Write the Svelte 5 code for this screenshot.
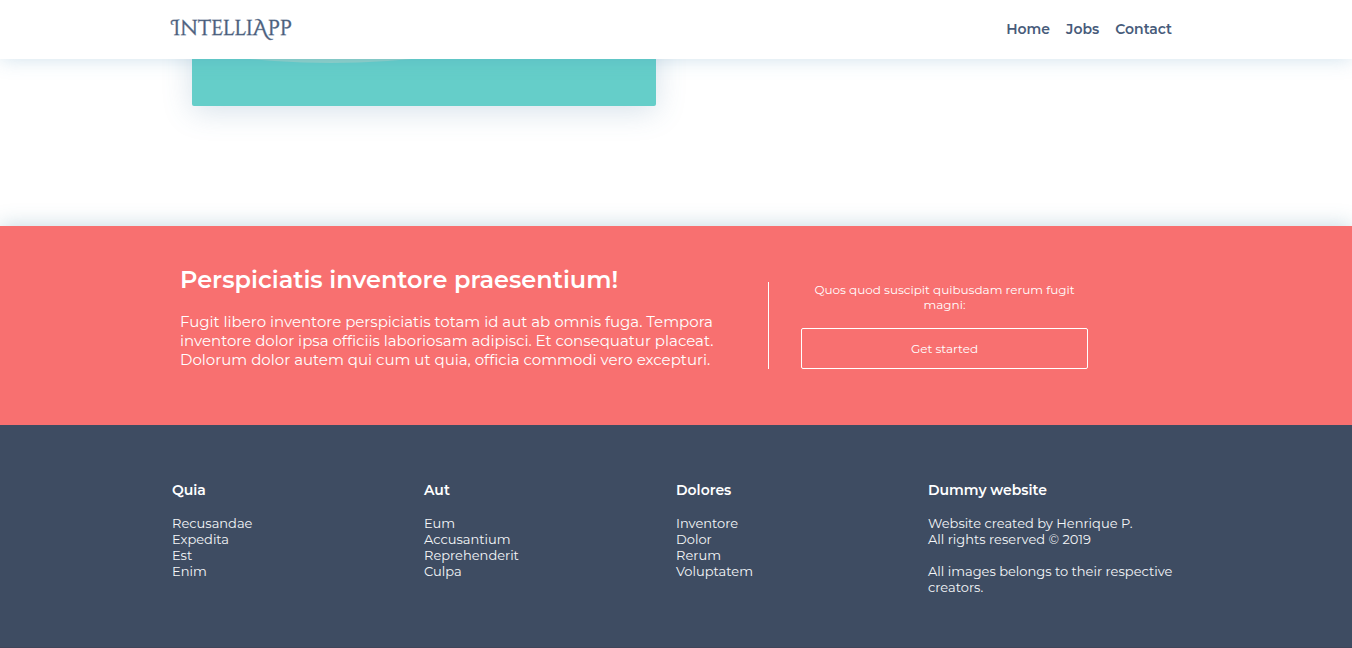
<script>
  const nav = ['Home', 'Jobs', 'Contact'];
  const columns = [
    { title: 'Quia', links: ['Recusandae', 'Expedita', 'Est', 'Enim'] },
    { title: 'Aut', links: ['Eum', 'Accusantium', 'Reprehenderit', 'Culpa'] },
    { title: 'Dolores', links: ['Inventore', 'Dolor', 'Rerum', 'Voluptatem'] }
  ];
</script>

<header class="topbar">
  <div class="container bar">
    <a class="brand" href="#home">IntelliApp</a>
    <nav>
      {#each nav as item}
        <a href="#{item.toLowerCase()}">{item}</a>
      {/each}
    </nav>
  </div>
</header>

<main>
  <section class="showcase">
    <div class="container">
      <div class="card">
        <svg viewBox="0 0 464 96" aria-hidden="true">
          <ellipse cx="139" cy="-47" rx="290" ry="100" />
        </svg>
      </div>
    </div>
  </section>

  <section class="banner">
    <div class="container pitch">
      <div class="copy">
        <h2>Perspiciatis inventore praesentium!</h2>
        <p>
          Fugit libero inventore perspiciatis totam id aut ab omnis fuga. Tempora
          inventore dolor ipsa officiis laboriosam adipisci. Et consequatur placeat.
          Dolorum dolor autem qui cum ut quia, officia commodi vero excepturi.
        </p>
      </div>
      <div class="action">
        <p>Quos quod suscipit quibusdam rerum fugit magni:</p>
        <button type="button">Get started</button>
      </div>
    </div>
  </section>
</main>

<footer>
  <div class="container columns">
    {#each columns as column}
      <div>
        <h3>{column.title}</h3>
        <ul>
          {#each column.links as link}
            <li><a href="#{link.toLowerCase()}">{link}</a></li>
          {/each}
        </ul>
      </div>
    {/each}
    <div>
      <h3>Dummy website</h3>
      <p>Website created by Henrique P.<br />All rights reserved © 2019</p>
      <p>All images belongs to their respective creators.</p>
    </div>
  </div>
</footer>

<style>
  :global(body) {
    margin: 0;
    background: #fff;
    font-family: Montserrat, Inter, sans-serif;
    font-size: 13px;
    line-height: 16px;
  }
  h2, h3, p, ul { margin: 0; padding: 0; }
  ul { list-style: none; }
  a { color: inherit; text-decoration: none; }
  .container {
    box-sizing: border-box;
    max-width: 1008px;
    margin: 0 auto;
  }
  .topbar {
    position: relative;
    z-index: 1;
    background: #fff;
    color: #475b7a;
    box-shadow: 0 0 20px rgba(70, 140, 180, 0.26);
  }
  .bar {
    display: flex;
    align-items: center;
    justify-content: space-between;
    padding: 13px 8px 14px 0;
  }
  .brand {
    font-family: "Cinzel Decorative", "Liberation Serif", serif;
    font-size: 21px;
    line-height: 32px;
    -webkit-text-stroke: 1px rgba(71, 91, 122, 0.6);
  }
  nav {
    display: flex;
    gap: 16px;
    font-size: 14px;
    font-weight: 600;
  }
  .showcase {
    overflow: hidden;
    padding-bottom: 120px;
  }
  .card {
    width: 46%;
    margin: -49px 0 0 20px;
    background: #65cec9;
    border-radius: 2px;
    box-shadow: 0 5px 30px rgba(70, 120, 160, 0.22);
  }
  .card svg { display: block; width: 100%; }
  .card ellipse { fill: #8ed1c9; }
  .banner {
    position: relative;
    background: #f87070;
    color: #fff;
    box-shadow: 0 0 20px rgba(70, 130, 160, 0.32);
  }
  .pitch {
    display: flex;
    align-items: flex-end;
    gap: 32px;
    padding: 38px 92px 56px 8px;
  }
  .copy { flex: 1; }
  h2 {
    margin-bottom: 16px;
    font-size: 24px;
    font-weight: 600;
    line-height: 32px;
  }
  .copy p {
    font-size: 15px;
    line-height: 19px;
  }
  .action {
    width: 287px;
    padding-left: 32px;
    border-left: 1px solid #fff;
    font-size: 12px;
    line-height: 15px;
    text-align: center;
  }
  .action p { margin-bottom: 16px; }
  button {
    width: 100%;
    padding: 12px;
    border: 1px solid #fff;
    border-radius: 2px;
    background: none;
    color: inherit;
    font: inherit;
  }
  footer {
    position: relative;
    padding: 57px 0 52px;
    border-bottom: 1px solid #3f4559;
    background: #3e4c62;
    color: #f4f6f8;
  }
  .columns {
    display: grid;
    grid-template-columns: repeat(4, 1fr);
  }
  h3 {
    margin-bottom: 17px;
    color: #fff;
    font-size: 14px;
    font-weight: 600;
  }
  footer p + p { margin-top: 16px; }
</style>
